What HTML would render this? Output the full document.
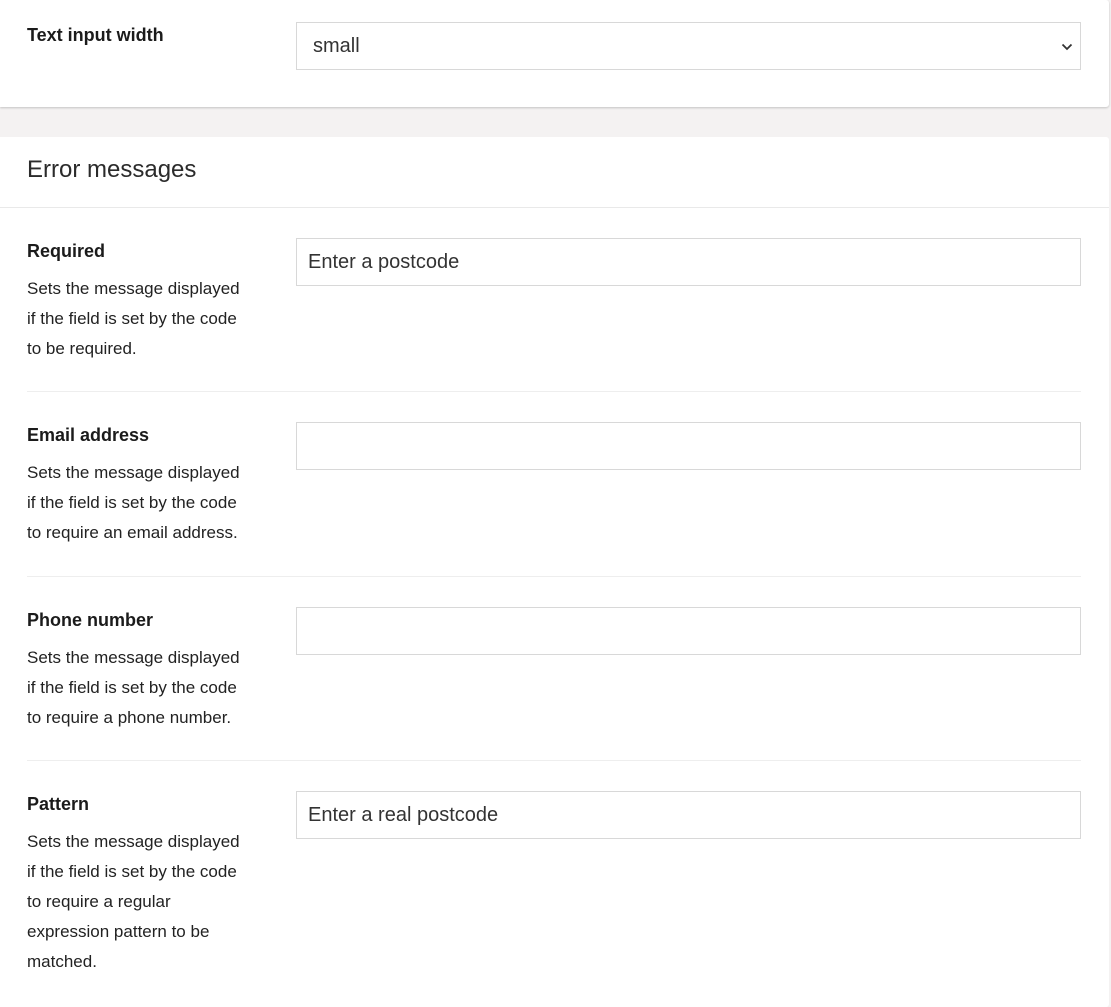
<!DOCTYPE html>
<html><head><style>
body{margin:0;background:#f4f2f2;font-family:"Liberation Sans",sans-serif;color:#1b1b1b;width:1111px;height:996px;overflow:hidden;position:relative}
.card{position:absolute;left:0;width:1109px;background:#fff;border-radius:0 3px 3px 0;box-shadow:0 1px 2px rgba(0,0,0,.2)}
.lbl{position:absolute;left:27px;font-weight:bold;font-size:18px}
.inp{position:absolute;left:296px;width:783px;height:46px;border:1px solid #d8d8d8;background:#fff;font-size:20px;color:#333;line-height:46px;box-sizing:content-box}
.inp span{padding-left:11px}
.desc{position:absolute;left:27px;font-size:17px;line-height:30px;color:#222;width:250px}
.hr{position:absolute;left:27px;width:1054px;height:1px;background:#eeeeee}
</style></head><body>
<div class="card" style="top:0;height:107px">
<div class="lbl" style="top:25px">Text input width</div>
<div class="inp" style="top:22px"><span style="padding-left:16px">small</span>
<svg style="position:absolute;right:7px;top:19px" width="12" height="10" viewBox="0 0 12 10"><path d="M1.5 2.5l4.5 4.5 4.5-4.5" fill="none" stroke="#333" stroke-width="1.8"/></svg></div>
</div>
<div class="card" style="top:137px;height:870px;box-shadow:none">
<div style="position:absolute;left:27px;top:19px;font-size:24px;color:#2b2b2b">Error messages</div>
<div style="position:absolute;left:0;top:70px;width:1109px;height:1px;background:#e9e9e9"></div>

<div class="lbl" style="top:104px">Required</div>
<div class="desc" style="top:137px">Sets the message displayed<br>if the field is set by the code<br>to be required.</div>
<div class="inp" style="top:101px"><span>Enter a postcode</span></div>
<div class="hr" style="top:254px"></div>

<div class="lbl" style="top:288px">Email address</div>
<div class="desc" style="top:321px">Sets the message displayed<br>if the field is set by the code<br>to require an email address.</div>
<div class="inp" style="top:285px"></div>
<div class="hr" style="top:439px"></div>

<div class="lbl" style="top:473px">Phone number</div>
<div class="desc" style="top:506px">Sets the message displayed<br>if the field is set by the code<br>to require a phone number.</div>
<div class="inp" style="top:470px"></div>
<div class="hr" style="top:623px"></div>

<div class="lbl" style="top:657px">Pattern</div>
<div class="desc" style="top:690px">Sets the message displayed<br>if the field is set by the code<br>to require a regular<br>expression pattern to be<br>matched.</div>
<div class="inp" style="top:654px"><span>Enter a real postcode</span></div>
</div>
</body></html>
